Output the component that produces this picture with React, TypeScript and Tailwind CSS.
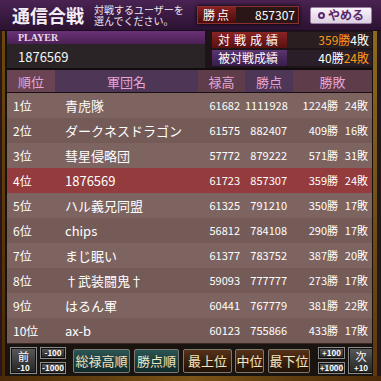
import React from "react";

const rows = [
  { rank: 1, name: "青虎隊", roku: 61682, pts: 1111928, win: 1224, lose: 24 },
  { rank: 2, name: "ダークネスドラゴン", roku: 61575, pts: 882407, win: 409, lose: 16 },
  { rank: 3, name: "彗星侵略団", roku: 57772, pts: 879222, win: 571, lose: 31 },
  { rank: 4, name: "1876569", roku: 61723, pts: 857307, win: 359, lose: 24, me: true },
  { rank: 5, name: "ハル義兄同盟", roku: 61325, pts: 791210, win: 350, lose: 17 },
  { rank: 6, name: "chips", roku: 56812, pts: 784108, win: 290, lose: 17 },
  { rank: 7, name: "まじ眠い", roku: 61377, pts: 783752, win: 387, lose: 20 },
  { rank: 8, name: "†武装闘鬼†", roku: 59093, pts: 777777, win: 273, lose: 17 },
  { rank: 9, name: "はるん軍", roku: 60441, pts: 767779, win: 381, lose: 22 },
  { rank: 10, name: "ax-b", roku: 60123, pts: 755866, win: 433, lose: 17 },
];

const GrayBtn = ({ children, className = "" }: { children: React.ReactNode; className?: string }) => (
  <div
    className={`shrink-0 flex flex-col items-center justify-center border border-[#8a8a8a] bg-gradient-to-b from-[#5a5a5a] to-[#242424] text-white font-bold leading-none shadow-[inset_0_0_0_1px_#111] ${className}`}
  >
    {children}
  </div>
);

const SortBtn = ({ label, teal, className = "" }: { label: string; teal?: boolean; className?: string }) => (
  <div
    className={`shrink-0 h-[24px] flex items-center justify-center rounded-[2px] border border-[#7c7a70] text-[13px] leading-none text-[#efe6c2] ${
      teal ? "bg-gradient-to-b from-[#2c5454] to-[#0f2a2a]" : "bg-gradient-to-b from-[#553218] to-[#241006]"
    } ${className}`}
  >
    {label}
  </div>
);

export default function App() {
  return (
    <div
      className="w-[381px] h-[381px] overflow-hidden bg-[#1c1218] text-white flex flex-col whitespace-nowrap"
      style={{ fontFamily: '"Noto Sans CJK JP", "Noto Sans", sans-serif' }}
    >
      {/* top bar */}
      <div className="h-[31px] shrink-0 flex items-center bg-gradient-to-b from-[#4a2352] via-[#3a1a42] to-[#2c1232] border-b border-[#1a0c1c] pl-[12px]">
        <span className="text-[18px] font-bold leading-none text-[#f4eef6]">通信合戦</span>
        <div className="ml-[10px] w-[92px] flex flex-col text-[10px] leading-[11px] text-[#f0e8f0]">
          <span className="h-[11px]">対戦するユーザーを</span>
          <span className="h-[11px]">選んでください。</span>
        </div>
        <div className="ml-[11px] shrink-0 h-[18px] w-[102px] flex border border-[#8a3030] shadow-[0_0_4px_#000]">
          <div className="w-[38px] bg-gradient-to-b from-[#8a2020] to-[#4a0c0c] flex items-center justify-center text-[12px] tracking-[2px] leading-none">
            勝点
          </div>
          <div className="flex-1 bg-[#2a1616] flex items-center justify-end pr-[3px] text-[12px] leading-none">857307</div>
        </div>
        <div className="ml-[11px] shrink-0 h-[17px] w-[62px] flex items-center justify-center gap-[3px] rounded-[2px] border border-[#9a80a0] bg-gradient-to-b from-[#faf4fb] to-[#dccfe0] text-[#5a2868] text-[12px] font-bold leading-none">
          <span className="w-[7px] h-[7px] rounded-full border-[2px] border-[#5a2868]" />
          やめる
        </div>
      </div>

      <div className="flex flex-1">
        {/* left frame */}
        <div className="w-[7px] shrink-0 flex">
          <div className="w-[2px] bg-[#2a1420]" />
          <div className="w-[3px] bg-gradient-to-b from-[#6a4a0a] to-[#4a2a06]" />
          <div className="w-[2px] bg-[#1a1010]" />
        </div>

        <div className="w-[365px] shrink-0 flex flex-col">
          {/* player section */}
          <div className="h-[37px] flex">
            <div className="w-[198px] flex flex-col">
              <div
                className="h-[13px] bg-gradient-to-b from-[#6a3276] to-[#4c2056] pl-[11px] text-[10px] font-bold leading-[13px] text-[#e6dcec]"
                style={{ fontFamily: '"Liberation Serif", serif' }}
              >
                PLAYER
              </div>
              <div className="flex-1 bg-[#2a2426] pl-[11px] flex items-center text-[13px] leading-none text-[#f4f4f4]">1876569</div>
            </div>
            <div className="flex-1 flex flex-col gap-[2px] bg-[#1e1418] pl-[7px] pt-[1px]">
              <div className="h-[16px] flex">
                <div className="w-[75px] bg-gradient-to-b from-[#8a2424] to-[#5a1010] pl-[6px] flex items-center text-[12px] tracking-[4px] leading-none">対戦成績</div>
                <div className="flex-1 bg-[#2a1e20] flex items-center justify-end pr-[3px] text-[12px] leading-none">
                  <span className="text-[#ff9a1a]">359勝</span>
                  <span>4敗</span>
                </div>
              </div>
              <div className="h-[16px] flex">
                <div className="w-[75px] bg-gradient-to-b from-[#5a3470] to-[#3a1c4c] pl-[6px] flex items-center text-[12px] leading-none">被対戦成績</div>
                <div className="flex-1 bg-[#2a1e28] flex items-center justify-end pr-[3px] text-[12px] leading-none">
                  <span>40勝</span>
                  <span className="text-[#ff9a1a]">24敗</span>
                </div>
              </div>
            </div>
          </div>

          <div className="h-[2px] bg-[#120c0e]" />

          {/* table */}
          <div className="h-[22px] flex text-[13px] leading-none text-[#e8a4d8]">
            <div className="w-[48px] bg-[#6a4452] flex items-center justify-center">順位</div>
            <div className="w-[143px] bg-[#4e3656] flex items-center justify-center">軍団名</div>
            <div className="w-[47px] bg-[#5e3c4a] flex items-center justify-center">禄高</div>
            <div className="w-[48px] bg-[#4e3656] flex items-center justify-center">勝点</div>
            <div className="flex-1 bg-[#5e3c4a] flex items-center justify-center">勝敗</div>
          </div>
          <div className="h-[1px] bg-[#1a1014]" />

          <div className="flex flex-col">
            {rows.map((r, i) => (
              <div
                key={r.rank}
                className={`h-[25px] flex items-center text-[11px] leading-none text-white ${
                  r.me ? "bg-[#943c3d]" : i % 2 === 0 ? "bg-[#7e6460]" : "bg-[#755b58]"
                }`}
              >
                <div className="w-[48px] pl-[6px] text-[12px]">{r.rank}位</div>
                <div className="w-[143px] pl-[10px] text-[13px]">{r.name}</div>
                <div className="w-[47px] pr-[5px] text-right">{r.roku}</div>
                <div className="w-[48px] pr-[6px] text-right">{r.pts}</div>
                <div className="w-[47px] pr-[2px] text-right">{r.win}勝</div>
                <div className="flex-1 pr-[4px] text-right">{r.lose}敗</div>
              </div>
            ))}
          </div>

          {/* bottom controls */}
          <div className="flex-1 bg-[#1a1410] border-t border-[#3a2a22] flex items-center pl-[3px] pt-[1px]">
            <GrayBtn className="w-[27px] h-[27px]">
              <span className="h-[12px] text-[11px] leading-[12px] font-normal">前</span>
              <span className="h-[9px] text-[8px] leading-[9px] mt-[1px]">-10</span>
            </GrayBtn>
            <div className="ml-[3px] flex flex-col gap-[3px]">
              <GrayBtn className="w-[26px] h-[12px] text-[8px]">-100</GrayBtn>
              <GrayBtn className="w-[26px] h-[12px] text-[8px]">-1000</GrayBtn>
            </div>
            <SortBtn teal label="総禄高順" className="ml-[7px] w-[57px]" />
            <SortBtn teal label="勝点順" className="ml-[4px] w-[45px]" />
            <SortBtn label="最上位" className="ml-[4px] w-[49px]" />
            <SortBtn label="中位" className="ml-[3px] w-[29px]" />
            <SortBtn label="最下位" className="ml-[4px] w-[42px]" />
            <div className="ml-[8px] flex flex-col gap-[3px]">
              <GrayBtn className="w-[27px] h-[12px] text-[8px]">+100</GrayBtn>
              <GrayBtn className="w-[27px] h-[12px] text-[8px]">+1000</GrayBtn>
            </div>
            <GrayBtn className="ml-[3px] w-[26px] h-[27px]">
              <span className="h-[12px] text-[11px] leading-[12px] font-normal">次</span>
              <span className="h-[9px] text-[8px] leading-[9px] mt-[1px]">+10</span>
            </GrayBtn>
          </div>
        </div>

        {/* right frame */}
        <div className="w-[9px] shrink-0 flex">
          <div className="w-[1px] bg-[#1a1010]" />
          <div className="w-[4px] bg-gradient-to-b from-[#8a6a20] to-[#5a3a0a]" />
          <div className="w-[4px] bg-[#24161a]" />
        </div>
      </div>
      <div className="h-[5px] shrink-0 bg-gradient-to-r from-[#4a2a08] via-[#7a5418] to-[#4a2a08]" />
    </div>
  );
}
